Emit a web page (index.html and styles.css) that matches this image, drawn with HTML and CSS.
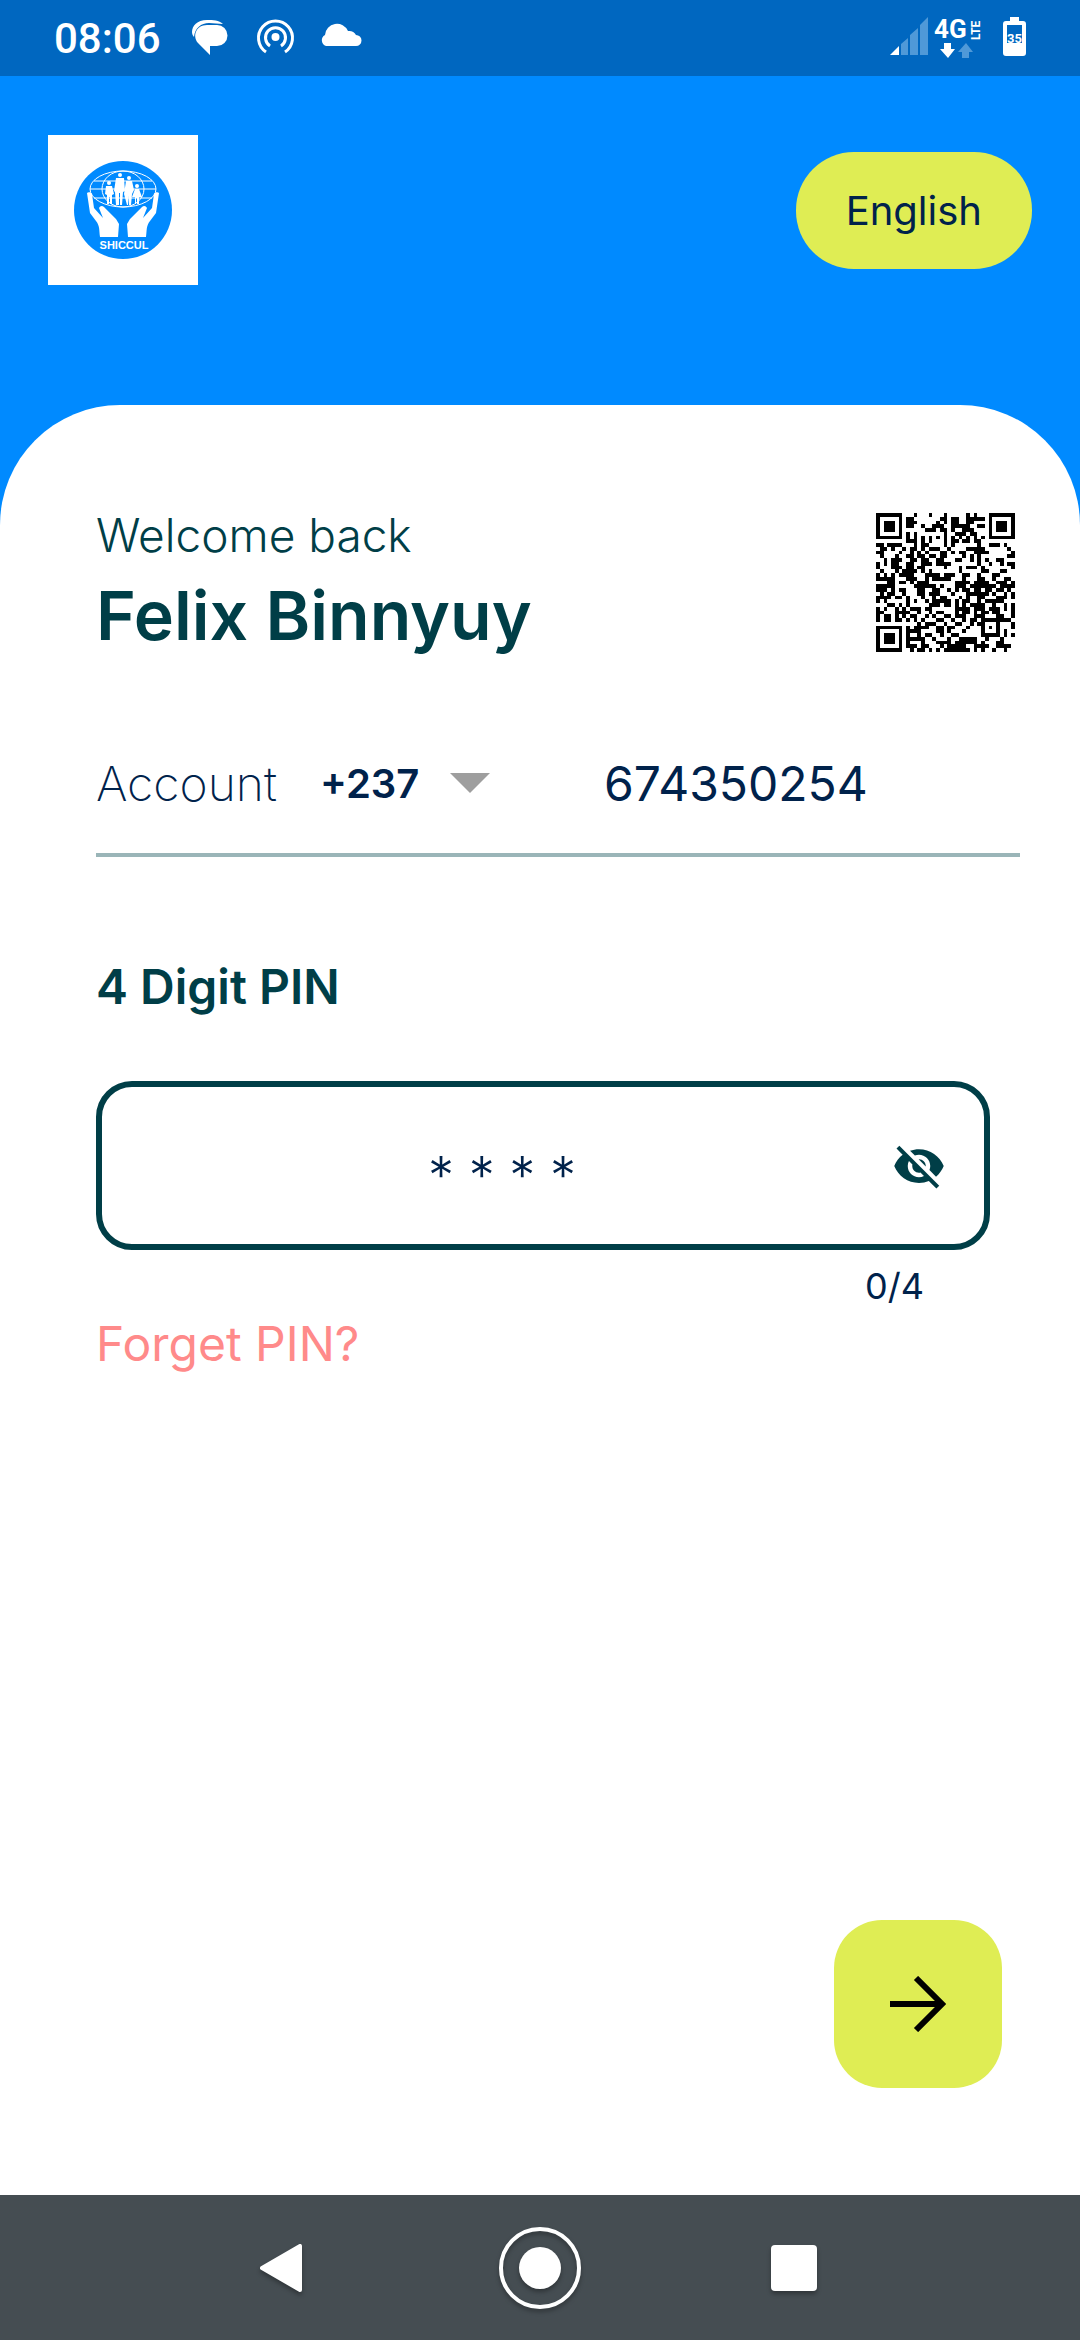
FILE: index.html
```html
<!DOCTYPE html>
<html lang="en">
<head>
	<meta charset="utf-8">
	<meta name="viewport" content="width=device-width, initial-scale=1">
	<title>SHICCUL</title>
	<link rel="stylesheet" href="styles.css">
</head>
<body>
	<div class="status-bar">
		<span class="time">08:06</span>
		<svg class="status-left" width="172" height="40" viewBox="0 0 172 40" fill="#fff">
			<path d="M32 6C28 2 22 2 16 2C6 2 1 8 1 14C1 16 2 18 3 19C4 10 10 5 18 5Z"/>
			<path d="M16 7h10a10.500 10.500 0 0 1 0 21h-7v9L7 25C1 18 5 7 16 7z"/>
			<g fill="none" stroke="#fff" stroke-width="3">
				<path d="M75 34a17 17 0 1 1 19 0"/>
				<path d="M79 28a10 10 0 1 1 11 0"/>
			</g>
			<circle cx="84.500" cy="19" r="4"/>
			<path d="M135 28a6 6 0 0 1-1-11 12 12 0 0 1 23-4 8 8 0 0 1 8 4 5.500 5.500 0 0 1 0 11z"/>
		</svg>
		<svg class="status-right" width="140" height="60" viewBox="0 -7 140 60" fill="#fff">
			<path d="M0 40L9 31V40z"/>
			<path fill="#4f99d8" d="M11 29l7-6v17h-7zM20 20l8-7v27h-8zM30 10l8-8v38h-8z"/>
			<text class="net" x="44" y="23">4G</text>
			<text class="lte" transform="translate(90 25) rotate(-90)">LTE</text>
			<path d="M54 28h7v6h4l-7 9-8-9h4z"/>
			<path fill="#4f99d8" d="M76 28l-8 9h4v6h7v-6h4z"/>
			<path d="M120 2h9v4h4a3 3 0 0 1 3 3v29a3 3 0 0 1-3 3h-17a3 3 0 0 1-3-3V9a3 3 0 0 1 3-3h4z"/>
			<path fill="#0067c0" d="M117 10h15v18h-15z"/>
			<text class="charge" x="117" y="28">35</text>
		</svg>
	</div>

	<header class="header">
		<svg class="logo" width="150" height="150" viewBox="0 0 150 150">
			<rect width="150" height="150" fill="#fff"/>
			<circle cx="75" cy="75" r="49" fill="#008aff"/>
			<g fill="none" stroke="#fff">
				<ellipse cx="75" cy="54" rx="33" ry="18"/>
				<ellipse cx="75" cy="54" rx="21" ry="18"/>
				<path d="M46 46h58M42 54h66M46 63h58"/>
			</g>
			<g fill="#fff">
				<circle cx="61" cy="48" r="2"/>
				<path d="M58 51h6l2 8-2 1v9h-2v-7h-1v7h-2v-9l-2-1z"/>
				<circle cx="72" cy="40" r="2"/>
				<path d="M68 43h8l1 13-2 1-1 13h-2V58h-1v12h-3l-1-13-1-1z"/>
				<circle cx="81" cy="43" r="2"/>
				<path d="M78 46h6l2 9-2 4-1 11h-2v-9l-1 9h-1l-3-11z"/>
				<circle cx="89" cy="51" r="2"/>
				<path d="M87 54h4l3 8h-3v7h-2v-6h-1v6h-1v-7h-3z"/>
				<path d="M39 58c1-1 4-1 5 1l2 14 9 10-4-10c1-2 3-3 5-1l12 12 3 5-1 13H52c-1-7 0-11-4-16l-6-8z"/>
				<path d="M111 58c-1-1-4-1-5 1l-2 14-9 10 4-10c-1-2-3-3-5-1L82 84l-3 5 1 13h18c1-7 0-11 4-16l6-8z"/>
				<text class="logo-name" x="76" y="114" text-anchor="middle">SHICCUL</text>
			</g>
		</svg>
		<button class="language" type="button">English</button>
	</header>

	<main class="card">
		<div class="welcome">
			<div>
				<p class="greeting">Welcome back</p>
				<h1>Felix Binnyuy</h1>
			</div>
			<svg class="qr" id="qr" viewBox="0 0 37 37" role="img" aria-label="QR code"></svg>
		</div>

		<form class="login" id="login">
			<div class="account">
				<label for="phone">Account</label>
				<div class="code">
					<select id="code" aria-label="Country code">
						<option>+237</option>
					</select>
					<svg width="40" height="20" viewBox="0 0 40 20"><path d="M0 0h40L20 20z" fill="#9e9e9e"/></svg>
				</div>
				<input type="tel" id="phone" value="674350254">
			</div>

			<label class="pin-label" for="pin">4 Digit PIN</label>
			<div class="pin-box">
				<input type="text" id="pin" value="* * * *">
				<button class="eye" type="button" aria-label="Show PIN">
					<svg width="54" height="54" viewBox="0 0 24 24" fill="#003e47">
						<path d="M12 7c2.760 0 5 2.240 5 5 0 .650-.130 1.260-.360 1.830l2.920 2.920c1.510-1.260 2.700-2.890 3.430-4.750-1.730-4.390-6-7.500-11-7.500-1.400 0-2.740.250-3.980.700l2.160 2.160C10.740 7.130 11.350 7 12 7zM2 4.270l2.280 2.280.460.460C3.080 8.300 1.780 10.020 1 12c1.730 4.390 6 7.500 11 7.500 1.550 0 3.030-.300 4.380-.840l.420.420L19.730 22 21 20.730 3.270 3 2 4.270zM7.530 9.800l1.550 1.550c-.050.210-.080.430-.080.650 0 1.660 1.340 3 3 3 .220 0 .440-.030.650-.080l1.550 1.550c-.670.330-1.410.530-2.200.530-2.760 0-5-2.240-5-5 0-.790.200-1.530.530-2.200zm4.310-.780l3.150 3.150.020-.160c0-1.660-1.340-3-3-3l-.170.010z"/>
					</svg>
				</button>
			</div>
			<p class="counter">0/4</p>
			<a class="forget" href="#">Forget PIN?</a>
		</form>

		<button class="next" type="submit" form="login" aria-label="Next">
			<svg width="56" height="56" viewBox="0 0 56 56" fill="none" stroke="#000" stroke-width="6">
				<path d="M0 28h51M26 2l26 26-26 26"/>
			</svg>
		</button>
	</main>

	<nav class="nav-bar">
		<button type="button" aria-label="Back">
			<svg width="84" height="84" viewBox="0 0 84 84"><path d="M18 42L56 20V64z" fill="#fff" stroke="#fff" stroke-width="4" stroke-linejoin="round"/></svg>
		</button>
		<button type="button" aria-label="Home">
			<svg width="84" height="84" viewBox="0 0 84 84"><circle cx="42" cy="42" r="39" fill="none" stroke="#fff" stroke-width="4"/><circle cx="42" cy="42" r="21" fill="#fff"/></svg>
		</button>
		<button type="button" aria-label="Recent apps">
			<svg width="84" height="84" viewBox="0 0 84 84"><rect x="19" y="19" width="46" height="46" rx="4" fill="#fff"/></svg>
		</button>
	</nav>

	<script src="qr.js"></script>
</body>
</html>
```

FILE: styles.css
```css
* {
	box-sizing: border-box;
}
body {
	margin: 0;
	min-height: 100vh;
	display: flex;
	flex-direction: column;
	font-family: Inter, Roboto, sans-serif;
	font-size: 48px;
	color: #00224b;
	background-color: #008aff;
}
p, h1 {
	margin: 0;
}
button, input, select {
	font: inherit;
	color: inherit;
	border: none;
	padding: 0;
	background: none;
}
button {
	cursor: pointer;
}
svg {
	display: block;
}

/* status bar */
.status-bar {
	display: flex;
	align-items: center;
	height: 76px;
	padding: 0 50px 0 54px;
	background-color: #0067c0;
	color: #fff;
}
.time {
	font-family: Roboto, sans-serif;
	font-size: 42px;
	font-weight: 500;
}
.status-left {
	margin-left: 30px;
}
.status-right {
	margin-left: auto;
}
.net {
	font: bold 26px Roboto, sans-serif;
}
.lte {
	font: bold 12px Roboto, sans-serif;
}
.charge {
	font: bold 13px Roboto, sans-serif;
}

/* header */
.header {
	display: flex;
	align-items: center;
	justify-content: space-between;
	padding: 59px 48px 120px;
}
.logo-name {
	font: bold 11px "Liberation Sans", sans-serif;
}
.language {
	padding: 0 50px;
	height: 117px;
	border-radius: 58px;
	background-color: #dfed54;
	font-size: 40px;
}

/* card */
.card {
	flex: 1;
	display: flex;
	flex-direction: column;
	padding: 96px 60px 107px 96px;
	border-radius: 120px 120px 0 0;
	background-color: #fff;
}
.welcome {
	display: flex;
	align-items: flex-start;
	justify-content: space-between;
	color: #003e47;
}
.greeting {
	line-height: 68px;
	font-size: 46px;
	font-weight: 300;
}
h1 {
	font-size: 68px;
	line-height: 92px;
	font-weight: 600;
}
.qr {
	width: 139px;
	height: 139px;
	margin: 12px 5px 0 0;
}
.account {
	display: flex;
	align-items: center;
	height: 148px;
	margin-top: 48px;
	padding-top: 4px;
	border-bottom: 4px solid #9ab5b8;
}
.account label {
	width: 224px;
	font-weight: 200;
}
.code {
	display: flex;
	align-items: center;
	width: 284px;
}
.code select {
	appearance: none;
	width: 130px;
	font-size: 40px;
	font-weight: 600;
}
.account input {
	flex: 1;
	min-width: 0;
}
.pin-label {
	display: block;
	margin-top: 100px;
	line-height: 60px;
	font-weight: 600;
	color: #003e47;
}
.pin-box {
	display: flex;
	align-items: center;
	height: 169px;
	margin: 64px 30px 0 0;
	padding: 0 38px 0 10px;
	border: 6px solid #003e47;
	border-radius: 36px;
}
.pin-box input {
	flex: 1;
	min-width: 0;
	padding-top: 20px;
	text-align: center;
	font-size: 52px;
	font-weight: 300;
}
.counter {
	margin: 14px 96px 0 0;
	line-height: 44px;
	font-size: 36px;
	text-align: right;
}
.forget {
	display: inline-block;
	line-height: 72px;
	color: #ff8a8a;
	text-decoration: none;
}
.next {
	display: flex;
	align-items: center;
	justify-content: center;
	align-self: flex-end;
	width: 168px;
	height: 168px;
	margin: auto 18px 0 0;
	border-radius: 48px;
	background-color: #dfed54;
}

/* navigation bar */
.nav-bar {
	display: flex;
	align-items: center;
	justify-content: center;
	gap: 170px;
	height: 145px;
	background-color: #454d52;
}
.nav-bar svg {
	filter: drop-shadow(0 3px 2px rgba(0, 0, 0, 0.3));
}
```

FILE: qr.js
```js
const size = 37;
const qr = document.getElementById("qr");
let seed = 237674;

function random() {
	seed = (seed * 1103515245 + 12345) % 2147483648;
	return seed / 2147483648;
}

// square marker: dark ring, light ring, dark centre
function marker(x, y, cx, cy, radius) {
	const d = Math.max(Math.abs(x - cx), Math.abs(y - cy));
	if (d > radius) return null;
	return d !== radius - 1;
}

function isDark(x, y) {
	const fill = random() < 0.5;
	for (const [cx, cy] of [[3, 3], [size - 4, 3], [3, size - 4]]) {
		const d = Math.max(Math.abs(x - cx), Math.abs(y - cy));
		if (d === 4) return false;
		const m = marker(x, y, cx, cy, 3);
		if (m !== null) return m;
	}
	const m = marker(x, y, 30, 30, 2);
	if (m !== null) return m;
	if (x === 6 || y === 6) return (x + y) % 2 === 0;
	return fill;
}

let path = "";
for (let y = 0; y < size; y++) {
	for (let x = 0; x < size; x++) {
		if (isDark(x, y)) path += `M${x} ${y}h1v1h-1z`;
	}
}
qr.innerHTML = `<path d="${path}" fill="#000" shape-rendering="crispEdges"/>`;
```
